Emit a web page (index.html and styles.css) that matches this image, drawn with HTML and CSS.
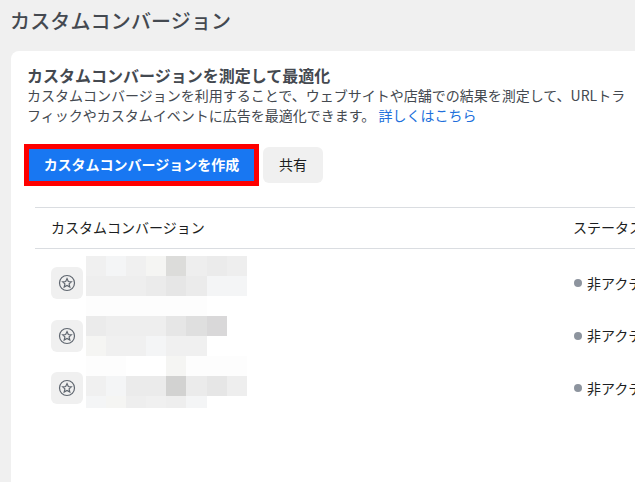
FILE: index.html
```html
<!DOCTYPE html>
<html lang="ja">
<head>
  <meta charset="UTF-8">
  <title>カスタムコンバージョン</title>
  <link rel="stylesheet" href="styles.css">
</head>
<body>
  <h1 class="page-title">カスタムコンバージョン</h1>

  <section class="card">
    <h2 class="card-title">カスタムコンバージョンを測定して最適化</h2>
    <p class="card-text">カスタムコンバージョンを利用することで、ウェブサイトや店舗での結果を測定して、URLトラフィックやカスタムイベントに広告を最適化できます。 <a href="#" class="link">詳しくはこちら</a></p>

    <div class="actions">
      <div class="highlight"><button class="btn btn-primary">カスタムコンバージョンを作成</button></div>
      <button class="btn btn-share">共有</button>
    </div>

    <div class="table">
      <div class="row row-head">
        <div class="cell-name">カスタムコンバージョン</div>
        <div class="cell-status">ステータス</div>
      </div>

      <div class="row">
        <div class="cell-name">
          <span class="icon-box"><svg viewBox="0 0 20 20" class="star"><circle cx="10" cy="10" r="7.5"/><path d="M10 5.6l1.3 2.9 3.1.3-2.3 2.1.7 3.1-2.8-1.6-2.8 1.6.7-3.1-2.3-2.1 3.1-.3z"/></svg></span>
        </div>
        <div class="cell-status"><i class="dot"></i><span class="status-text">非アクティブ</span></div>
      </div>
      <div class="row">
        <div class="cell-name">
          <span class="icon-box"><svg viewBox="0 0 20 20" class="star"><circle cx="10" cy="10" r="7.5"/><path d="M10 5.6l1.3 2.9 3.1.3-2.3 2.1.7 3.1-2.8-1.6-2.8 1.6.7-3.1-2.3-2.1 3.1-.3z"/></svg></span>
        </div>
        <div class="cell-status"><i class="dot"></i><span class="status-text">非アクティブ</span></div>
      </div>
      <div class="row">
        <div class="cell-name">
          <span class="icon-box"><svg viewBox="0 0 20 20" class="star"><circle cx="10" cy="10" r="7.5"/><path d="M10 5.6l1.3 2.9 3.1.3-2.3 2.1.7 3.1-2.8-1.6-2.8 1.6.7-3.1-2.3-2.1 3.1-.3z"/></svg></span>
        </div>
        <div class="cell-status"><i class="dot"></i><span class="status-text">非アクティブ</span></div>
      </div>

      <!-- blurred names -->
      <div class="mosaic">
        <i class="t3"></i><i class="t2"></i><i class="t3"></i><i class="t1"></i><i class="t8"></i><i class="t4"></i><i class="t5"></i><i class="t4"></i>
        <i class="t4"></i><i class="t4"></i><i class="t4"></i><i class="t5"></i><i class="t6"></i><i class="t5"></i><i class="t2"></i><i class="t2"></i>
        <i class="t0"></i><i class="t0"></i><i class="t0"></i><i class="t0"></i><i class="t0"></i><i class="t0"></i><i></i><i></i>
        <i class="t5"></i><i class="t4"></i><i class="t4"></i><i class="t4"></i><i class="t6"></i><i class="t7"></i><i class="t9"></i><i></i>
        <i class="t1"></i><i class="t3"></i><i class="t3"></i><i class="t2"></i><i class="t3"></i><i class="t3"></i><i></i><i></i>
        <i class="t0"></i><i class="t0"></i><i></i><i></i><i class="t1"></i><i class="t0"></i><i class="t0"></i><i class="t0"></i>
        <i class="t3"></i><i class="t2"></i><i class="t5"></i><i class="t5"></i><i class="t10"></i><i class="t5"></i><i class="t6"></i><i class="t4"></i>
        <i class="t2"></i><i class="t1"></i><i class="t4"></i><i class="t3"></i><i class="t4"></i><i class="t2"></i><i></i><i></i>
      </div>
    </div>
  </section>
</body>
</html>
```

FILE: styles.css
```css
html, body {
  height: 100%;
}

body {
  margin: 0;
  background: #f0f0f0;
  color: #1c1e21;
  font-family: "Noto Sans CJK JP", "Liberation Sans", sans-serif;
  overflow: hidden;
}

.page-title {
  margin: 0;
  padding: 6px 0 0 10px;
  height: 45px;
  font-size: 20px;
  letter-spacing: 0.15px;
  line-height: 30px;
  font-weight: 500;
  color: #444950;
}

.card {
  box-sizing: border-box;
  margin-left: 11px;
  width: 624px;
  height: 431px;
  padding: 14px 0 0 16px;
  background: #fff;
  border-radius: 8px 0 0 0;
  overflow: hidden;
}

.card-title {
  margin: 0;
  font-size: 16px;
  line-height: 20px;
  font-weight: 700;
  color: #444950;
}

.card-text {
  margin: 0;
  width: 600px;
  font-size: 14px;
  line-height: 20px;
  color: #444950;
}

.link {
  color: #216fdb;
  text-decoration: none;
}

.actions {
  display: flex;
  align-items: center;
  gap: 4px;
  margin: 19px 0 0 -3px;
}

.highlight {
  padding: 5px;
  background: #fe0000;
}

.btn {
  display: block;
  border: 0;
  padding: 0 0 3px;
  font-family: inherit;
  font-size: 14px;
  font-weight: 700;
}

.btn-primary {
  width: 225px;
  height: 32px;
  background: #1877f2;
  color: #fff;
}

.btn-share {
  width: 60px;
  height: 36px;
  border-radius: 6px;
  background: #f0f0f0;
  color: #1c1e21;
  font-weight: 400;
}

.table {
  position: relative;
  margin: 21px 0 0 8px;
  border-top: 1px solid #dadde1;
}

.row {
  display: grid;
  grid-template-columns: 538px 1fr;
  align-items: center;
  height: 52.5px;
  font-size: 14px;
}

.row-head {
  box-sizing: border-box;
  height: 41px;
  padding-bottom: 3px;
  border-bottom: 1px solid #dadde1;
  margin-bottom: 8px;
}

.cell-name {
  padding-left: 16px;
}

.cell-status {
  display: flex;
  align-items: center;
  white-space: nowrap;
}

.row .cell-status {
  padding-left: 1px;
}

.row-head .cell-status {
  margin-left: -1px;
}

.status-text {
  margin-top: -1px;
}

.icon-box {
  display: flex;
  align-items: center;
  justify-content: center;
  width: 32px;
  height: 32px;
  border-radius: 6px;
  background: #f0f0f0;
}

.star {
  width: 20px;
  height: 20px;
  fill: none;
  stroke: #606770;
  stroke-width: 1.2;
}

.dot {
  width: 8px;
  height: 8px;
  margin-right: 5px;
  border-radius: 50%;
  background: #8d949e;
}

.mosaic {
  position: absolute;
  left: 51px;
  top: 48px;
  display: grid;
  grid-template-columns: repeat(8, 20.1px);
  grid-template-rows: repeat(7, 20px) 12px;
}

.t0 { background: #fdfdfd; }
.t1 { background: #f5f5f3; }
.t2 { background: #f4f5f6; }
.t3 { background: #f0f0f0; }
.t4 { background: #eeeeee; }
.t5 { background: #ebebeb; }
.t6 { background: #e6e6e6; }
.t7 { background: #dfdfdf; }
.t8 { background: #dcdcda; }
.t9 { background: #d9d8d9; }
.t10 { background: #d2d2d1; }
```
